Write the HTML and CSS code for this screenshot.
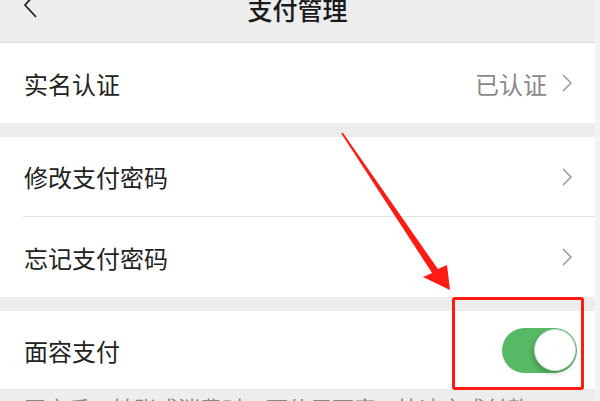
FILE: index.html
```html
<!DOCTYPE html>
<html lang="zh-CN">

<head>
    <meta charset="UTF-8" />
    <meta name="viewport" content="width=device-width, initial-scale=1.0" />
    <title>支付管理</title>
    <link rel="stylesheet" href="styles.css">
</head>

<body>
    <div class="page">
        <!-- Nav Bar -->
        <div class="nav-bar">
            <div class="nav-back">
                <svg width="14" height="30" viewBox="0 0 14 30">
                    <polyline points="13,1 2,13 13,25" fill="none" stroke="#222" stroke-width="1.8" />
                </svg>
            </div>
            <div class="nav-title">支付管理</div>
            <div></div>
        </div>

        <!-- Settings -->
        <div class="group">
            <div class="cell">
                <div class="cell-label">实名认证</div>
                <div class="cell-value">已认证</div>
                <svg class="chevron" width="12" height="20" viewBox="0 0 12 20">
                    <polyline points="2,2 10,10 2,18" fill="none" stroke="#999" stroke-width="1.5" />
                </svg>
            </div>
        </div>

        <div class="group">
            <div class="cell divided">
                <div class="cell-label">修改支付密码</div>
                <svg class="chevron" width="12" height="20" viewBox="0 0 12 20">
                    <polyline points="2,2 10,10 2,18" fill="none" stroke="#999" stroke-width="1.5" />
                </svg>
            </div>
            <div class="cell">
                <div class="cell-label">忘记支付密码</div>
                <svg class="chevron" width="12" height="20" viewBox="0 0 12 20">
                    <polyline points="2,2 10,10 2,18" fill="none" stroke="#999" stroke-width="1.5" />
                </svg>
            </div>
        </div>

        <div class="group">
            <div class="cell cell-switch">
                <div class="cell-label">面容支付</div>
                <div class="switch on">
                    <div class="switch-knob"></div>
                </div>
            </div>
        </div>

        <div class="group-tip">开启后，转账或消费时，可使用面容ID快速完成付款。</div>

        <!-- Annotation -->
        <div class="mark-box"></div>
        <svg class="mark-arrow" width="600" height="401" viewBox="0 0 600 401">
            <polygon points="342.7,132.5 437.9,269 447,265 450,290 423,277 432.1,273 341.3,133.5" fill="#ff1a12" />
        </svg>
    </div>
</body>

</html>
```

FILE: styles.css
```css
body {
    font-family: "Noto Sans CJK SC", "Noto Sans", sans-serif;
    background-color: #f3f3f3;
    margin: 0;
    padding: 0;
    overflow: hidden;
}

.page {
    position: relative;
    width: 595px;
    height: 401px;
    background-color: #ededed;
    overflow: hidden;
}

.nav-bar {
    display: grid;
    grid-template-columns: 1fr auto 1fr;
    align-items: start;
    height: 42px;
    border-bottom: 1px solid #dcdcdc;
}

.nav-back {
    padding-left: 23px;
    margin-top: -8px;
}

.nav-title {
    font-size: 25px;
    line-height: 25px;
    font-weight: 500;
    color: #1a1a1a;
    margin-top: -3px;
}

.group {
    background: white;
    margin-bottom: 14px;
}

.cell {
    display: flex;
    align-items: center;
    height: 80px;
    padding: 0 22px 0 24px;
    position: relative;
}

.cell.divided {
    height: 79px;
}

.cell.divided::after {
    content: "";
    position: absolute;
    left: 23px;
    right: 0;
    bottom: -1px;
    height: 1px;
    background: #e3e3e3;
}

.cell.divided + .cell {
    margin-top: 1px;
}

.cell-label {
    flex: 1;
    font-size: 24px;
    color: #222;
}

.cell-value {
    font-size: 24px;
    color: #888;
    margin-right: 14px;
}

.chevron {
    display: block;
}

.cell-switch {
    height: 78px;
    padding-right: 18px;
}

.switch {
    width: 75px;
    height: 45px;
    border-radius: 23px;
    background: #e5e5e5;
    display: flex;
    align-items: center;
    box-sizing: border-box;
    padding: 1px;
}

.switch.on {
    background: #55b966;
    justify-content: flex-end;
}

.switch-knob {
    width: 42px;
    height: 42px;
    border-radius: 50%;
    background: white;
    box-sizing: border-box;
    border: 1px solid #cfd8cf;
    box-shadow: -2px 3px 4px rgba(0, 0, 0, 0.18);
}

.group-tip {
    margin-top: -14px;
    padding: 3px 24px 0;
    font-size: 22px;
    line-height: 30px;
    color: #888;
    white-space: nowrap;
}

.mark-box {
    position: absolute;
    left: 452px;
    top: 297px;
    width: 132px;
    height: 93px;
    box-sizing: border-box;
    border: 3px solid #ff1a12;
    border-radius: 3px;
}

.mark-arrow {
    position: absolute;
    left: 0;
    top: 0;
    pointer-events: none;
}
```
